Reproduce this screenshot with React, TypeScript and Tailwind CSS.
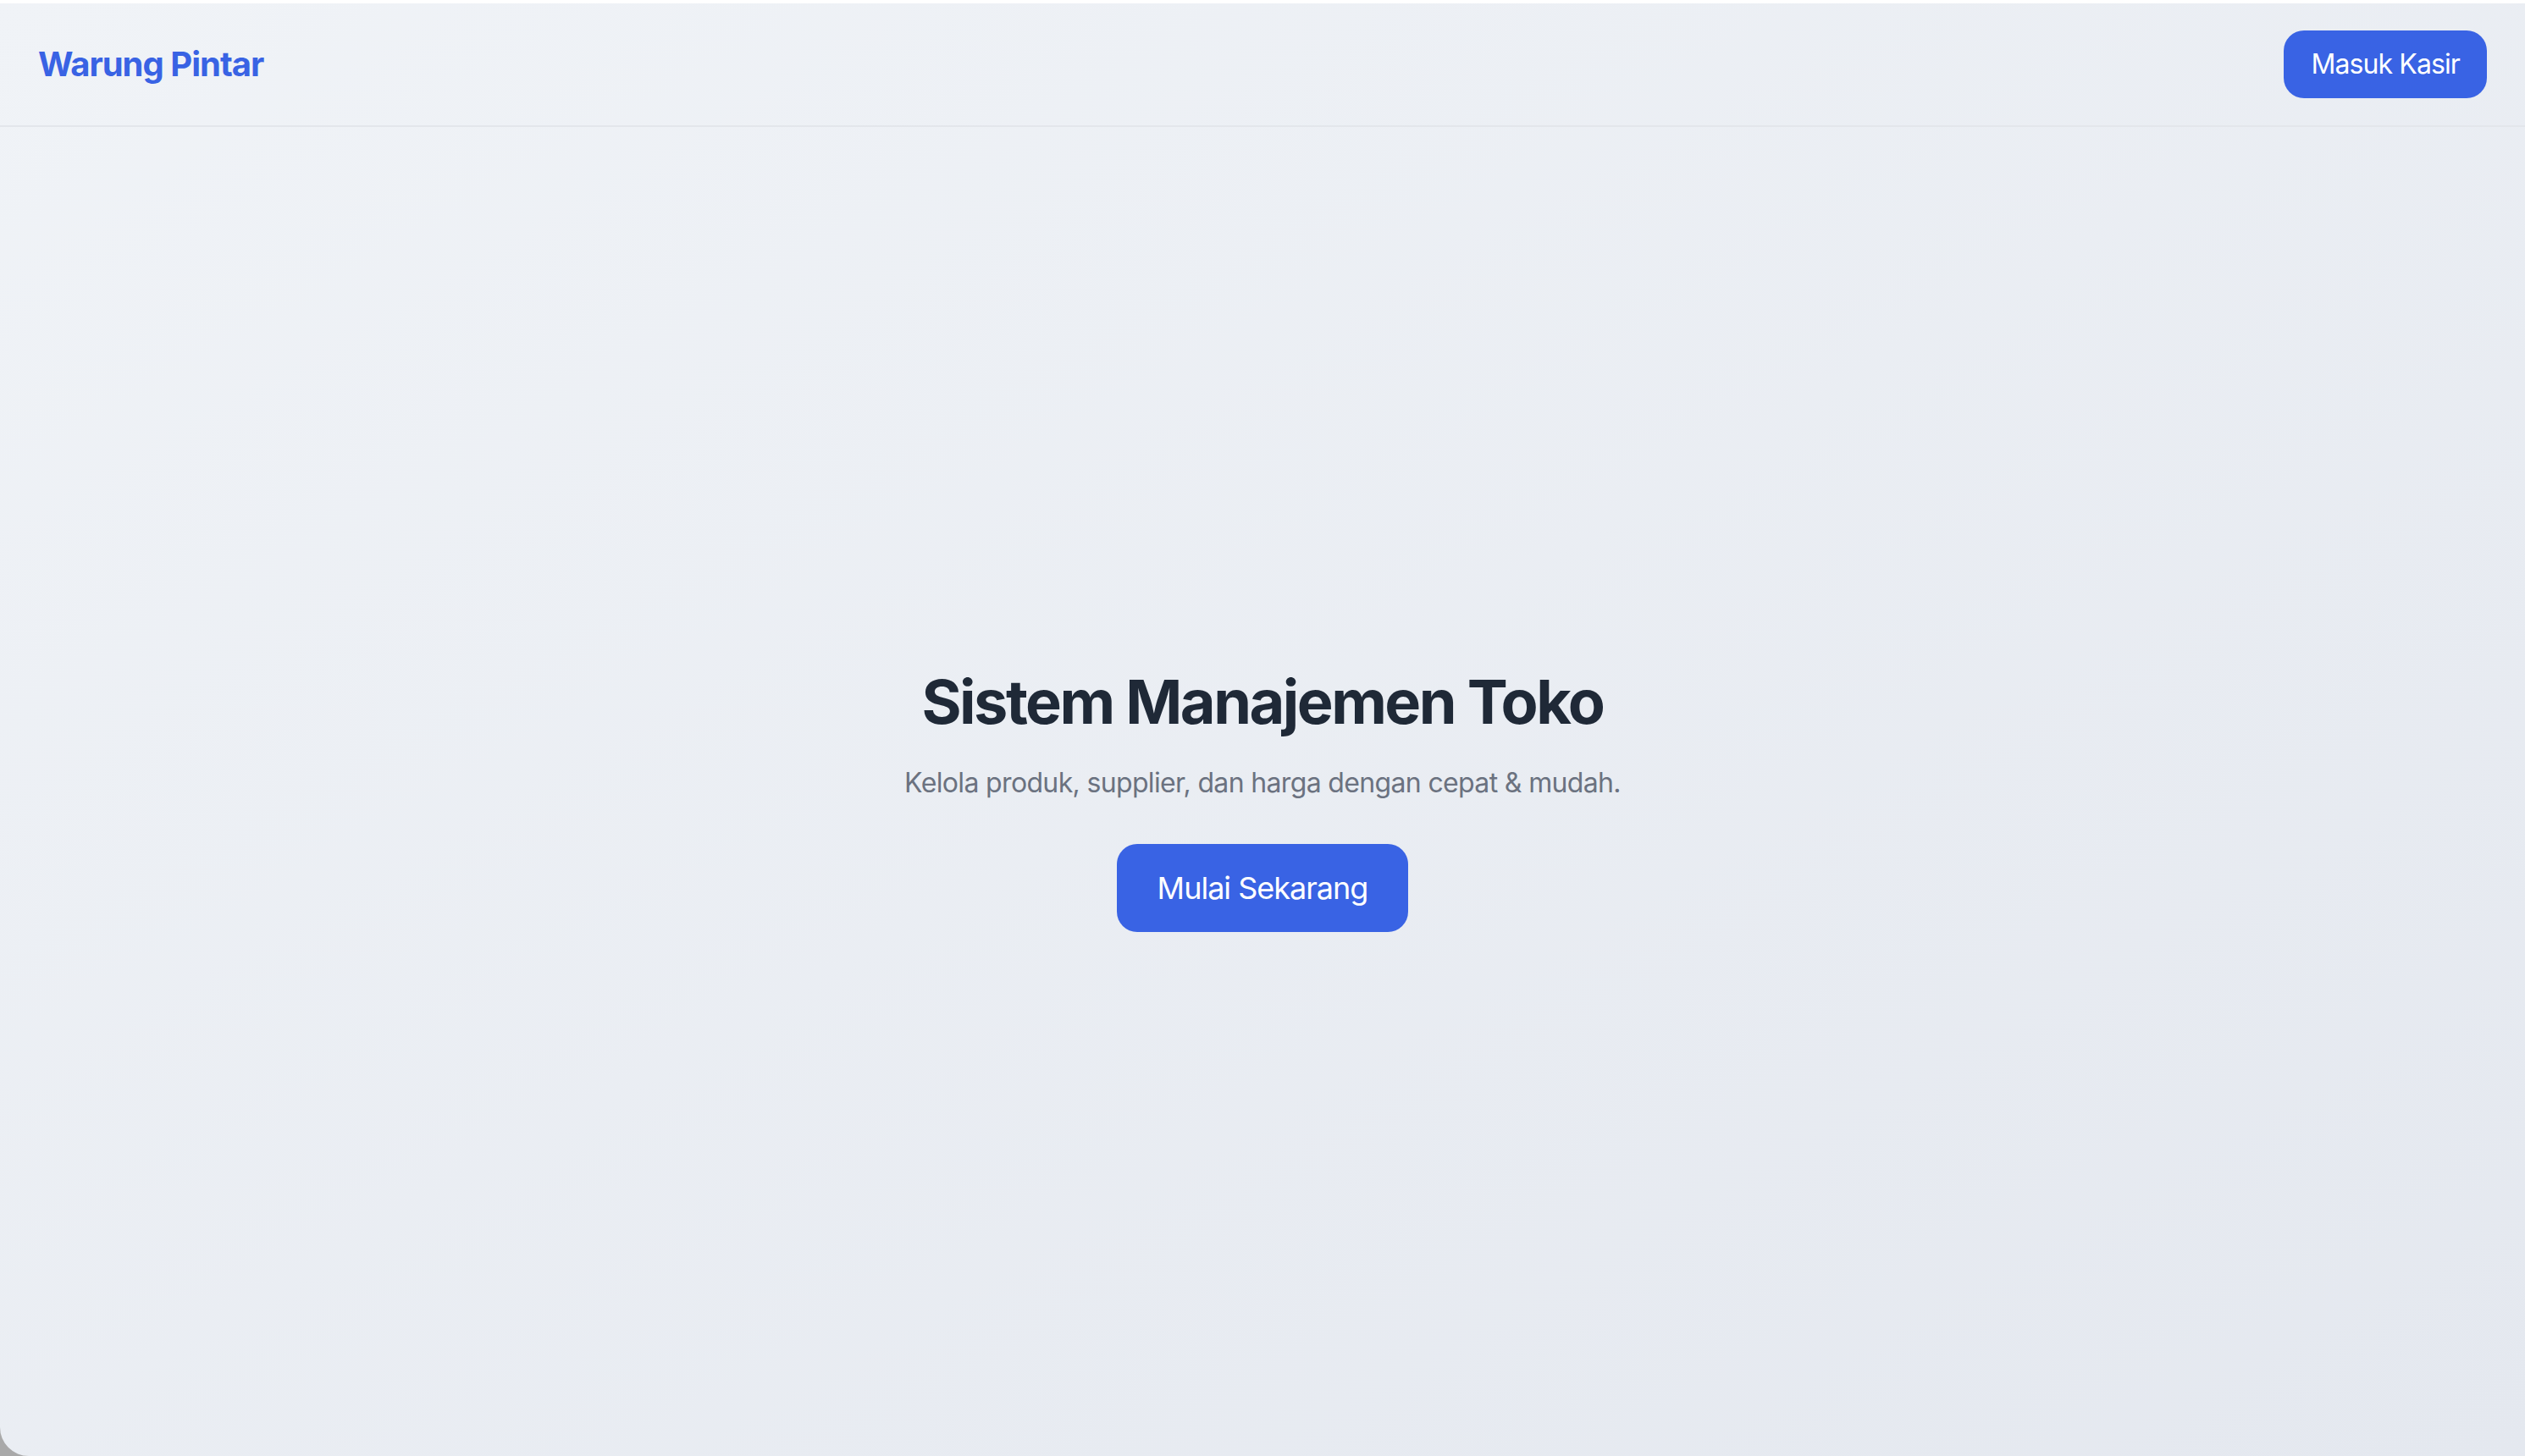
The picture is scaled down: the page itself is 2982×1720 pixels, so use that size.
import React from "react";

export default function App() {
  return (
    <div className="h-[1720px] w-full bg-[#a9a9a9] font-['Inter','Liberation_Sans',sans-serif]">
      <div className="flex h-full flex-col overflow-hidden rounded-bl-[34px] bg-gradient-to-br from-[#f0f3f7] to-[#e4e8ef]">
        <div className="h-[4px] bg-white" />
        <header className="flex items-center justify-between border-b-2 border-[#e3e6eb] px-[45px] py-[32px]">
          <span className="text-[40px] font-bold tracking-[-1px] text-[#3963e4]">Warung Pintar</span>
          <button className="h-[80px] rounded-[24px] bg-[#3963e4] px-[32px] text-[32px] tracking-[-0.9px] text-white">
            Masuk Kasir
          </button>
        </header>

        <main className="flex flex-1 flex-col items-center justify-center pt-[19px] text-center">
          <h1 className="text-[72px] font-bold leading-[80px] tracking-[-2.5px] text-[#1f2937]">
            Sistem Manajemen Toko
          </h1>
          <p className="mt-[32px] text-[32px] leading-[48px] tracking-[-0.65px] text-[#6b7280]">
            Kelola produk, supplier, dan harga dengan cepat &amp; mudah.
          </p>
          <button className="mt-[48px] h-[104px] rounded-[24px] bg-[#3963e4] px-[48px] text-[36px] tracking-[-1px] text-white">
            Mulai Sekarang
          </button>
        </main>
      </div>
    </div>
  );
}
